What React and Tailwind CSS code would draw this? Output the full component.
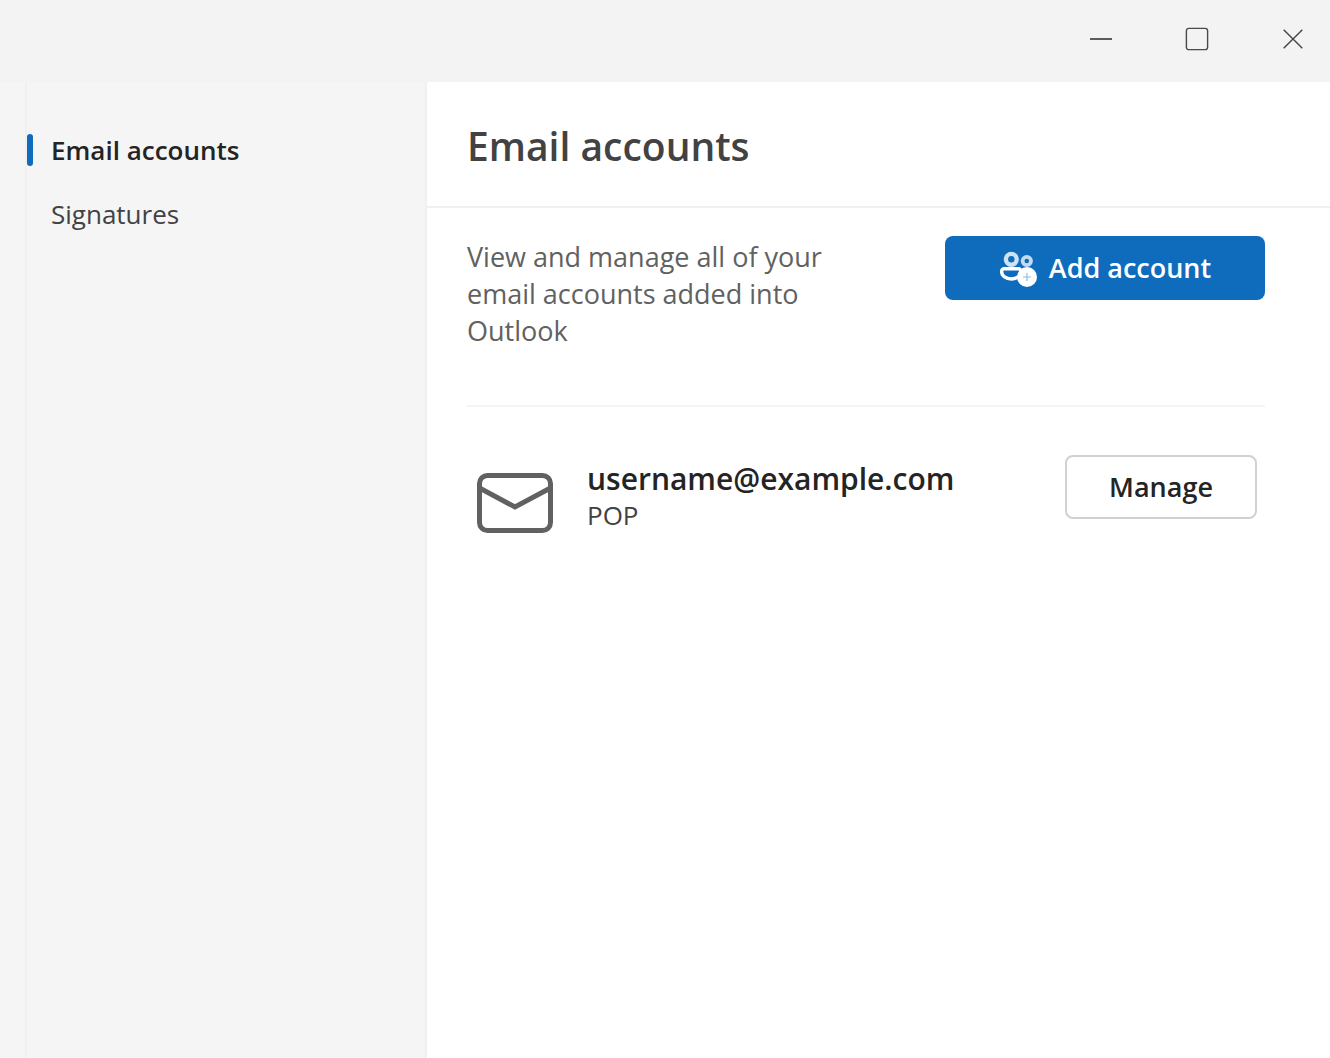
function MinimizeIcon() {
  return (
    <svg className="h-6 w-6" viewBox="0 0 24 24" aria-hidden="true">
      <path d="M1 12h22" stroke="#5c5c5c" strokeWidth="2" />
    </svg>
  );
}

function MaximizeIcon() {
  return (
    <svg className="h-6 w-6" viewBox="0 0 24 24" fill="none" aria-hidden="true">
      <rect x="1.4" y="1.4" width="21.2" height="21.2" rx="2.4" stroke="#4a4a4a" strokeWidth="1.4" />
    </svg>
  );
}

function CloseIcon() {
  return (
    <svg className="h-6 w-6" viewBox="0 0 24 24" fill="none" aria-hidden="true">
      <path d="M2.7 2.7l18.6 18.6M21.3 2.7L2.7 21.3" stroke="#444" strokeWidth="1.4" />
    </svg>
  );
}

function PeopleAddIcon() {
  return (
    <svg className="h-10 w-10 shrink-0" viewBox="0 0 40 40" fill="none" aria-hidden="true">
      <circle cx="12.3" cy="11.3" r="5.4" stroke="#cfe2f4" strokeWidth="4.4" />
      <circle cx="27.8" cy="13" r="4.2" stroke="#c3daf0" strokeWidth="3.8" />
      <path
        d="M5.2 20.7H19.4a2.6 2.6 0 0 1 2.6 2.6C22 28.2 17.5 31 12.3 31S2.6 28.2 2.6 23.3a2.6 2.6 0 0 1 2.6-2.6z"
        stroke="#fff"
        strokeWidth="3.4"
      />
      <circle cx="28" cy="29" r="10" fill="#fff" />
      <path d="M28 25v8M24 29h8" stroke="#8dbce4" strokeWidth="1.2" />
    </svg>
  );
}

function MailIcon() {
  return (
    <svg className="h-20 w-20 shrink-0" viewBox="0 0 80 80" fill="none" aria-hidden="true">
      <rect x="4.5" y="12.5" width="71" height="55" rx="8" stroke="#616161" strokeWidth="5" />
      <path d="M5 25.200l35 18.800L75 25.200" stroke="#616161" strokeWidth="5" />
    </svg>
  );
}

export default function App() {
  return (
    <div className="flex min-h-screen flex-col bg-white font-['Segoe_UI','Open_Sans',sans-serif] text-[#242424]">
      <header className="flex h-[82px] items-center justify-end gap-[72px] bg-[#f3f3f3] px-[25px] pb-1">
        <button aria-label="Minimize"><MinimizeIcon /></button>
        <button aria-label="Maximize"><MaximizeIcon /></button>
        <button aria-label="Close"><CloseIcon /></button>
      </header>

      <div className="flex grow">
        <aside className="flex w-[427px] shrink-0 border-r-2 border-[#f0f0f0] bg-[#f5f5f5] pl-[25px]">
          <nav className="grow border-l-2 border-[#f0f0f0] pt-9 text-[26px] leading-9">
            <a href="#accounts" aria-current="page" className="flex h-16 items-center gap-[18px] font-semibold">
              <span className="h-8 w-1.5 rounded-full bg-[#0f6cbd]" />
              Email accounts
            </a>
            <a href="#signatures" className="flex h-16 items-center pl-6 text-[#424242]">
              Signatures
            </a>
          </nav>
        </aside>

        <main className="min-w-0 grow">
          <div className="flex h-[126px] items-center border-b-2 border-[#f0f0f0] px-10 pt-1">
            <h1 className="text-[39px] leading-[52px] font-semibold text-[#424242]">Email accounts</h1>
          </div>

          <div className="pr-[65px] pl-10">
            <section className="flex items-start justify-between border-b-2 border-[#f5f5f5] pt-7 pb-14">
              <p className="w-[380px] pt-0.5 text-[27px] leading-[37px] text-[#616161]">
                View and manage all of your email accounts added into Outlook
              </p>
              <button className="flex h-16 w-80 items-center justify-center gap-2.5 rounded-lg bg-[#0f6cbd] text-[27px] font-semibold text-white">
                <PeopleAddIcon />
                Add account
              </button>
            </section>

            <section className="flex items-start pt-12 pr-2 pl-2">
              <div className="pt-2"><MailIcon /></div>
              <div className="grow pt-1.5 pl-8">
                <h2 className="text-[30px] leading-9 font-semibold">username@example.com</h2>
                <p className="text-[26px] leading-[37px] text-[#424242]">POP</p>
              </div>
              <button className="h-16 w-48 rounded-lg border-2 border-[#d1d1d1] bg-white text-[27px] font-semibold">
                Manage
              </button>
            </section>
          </div>
        </main>
      </div>
    </div>
  );
}
